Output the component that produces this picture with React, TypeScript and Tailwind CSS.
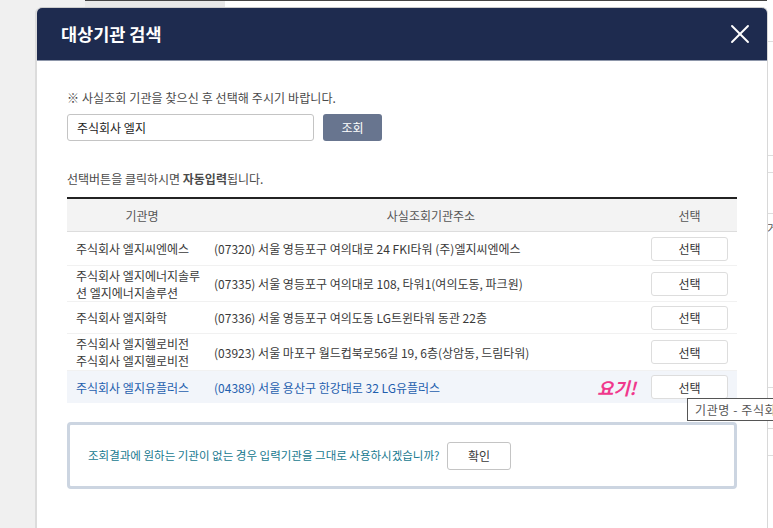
import { X } from "lucide-react"

interface Row {
  name: string[]
  address: string
  height: string
  active?: boolean
}

const rows: Row[] = [
  { name: ["주식회사 엘지씨엔에스"], address: "(07320) 서울 영등포구 여의대로 24 FKI타워 (주)엘지씨엔에스", height: "h-[34px]" },
  { name: ["주식회사 엘지에너지솔루", "션 엘지에너지솔루션"], address: "(07335) 서울 영등포구 여의대로 108, 타워1(여의도동, 파크원)", height: "h-[36px]" },
  { name: ["주식회사 엘지화학"], address: "(07336) 서울 영등포구 여의도동 LG트윈타워 동관 22층", height: "h-[32px]" },
  { name: ["주식회사 엘지헬로비전", "주식회사 엘지헬로비전"], address: "(03923) 서울 마포구 월드컵북로56길 19, 6층(상암동, 드림타워)", height: "h-[37px]" },
  { name: ["주식회사 엘지유플러스"], address: "(04389) 서울 용산구 한강대로 32 LG유플러스", height: "h-[32px]", active: true },
]

const rightLines = ["top-[41px]", "top-[155px]", "top-[172px]", "top-[213px]", "top-[387px]", "top-[428px]", "top-[455px]"]

export default function App() {
  return (
    <div className="relative h-[528px] w-[773px] overflow-hidden bg-[#f0f0f0] pl-[37px] pt-2 font-['Noto_Sans_CJK_KR','Noto_Sans',sans-serif] text-xs text-[#3a3a3a]">
      {/* page behind the modal */}
      <div className="absolute left-[85px] top-0 h-2 w-[140px] border-t border-[#444] bg-[#e8e8e8]" />
      <div className="absolute left-[225px] right-0 top-0 h-2 border-t border-[#444] bg-white" />
      <div className="absolute bottom-0 right-0 top-0 w-[6px] bg-white" />
      {rightLines.map((top) => (
        <div key={top} className={`absolute right-0 h-px w-[6px] bg-[#ddd] ${top}`} />
      ))}
      <span className="absolute right-0 top-[221px] w-[6px] overflow-hidden text-[11px] text-[#555]">거</span>

      {/* modal */}
      <div className="relative h-[540px] w-[730px] rounded-t-[5px] bg-white shadow-[-2px_0_0_#dcdcdc,1px_0_0_#d8d8d8,0_-1px_0_#ccc]">
        <div className="flex h-[53px] items-center justify-between rounded-t-[5px] border-b border-[#8d96aa] bg-[#1e2b4f] pl-6 pr-[11px] text-white">
          <h2 className="text-[17.5px] font-bold">대상기관 검색</h2>
          <X className="h-8 w-8" strokeWidth={1.4} />
        </div>

        <div className="px-[30px] pt-[27px]">
          <p className="h-[19px] leading-[19px] tracking-[0.1px] text-[#4a4a4a]">※ 사실조회 기관을 찾으신 후 선택해 주시기 바랍니다.</p>
          <div className="mt-[7px] flex gap-[9px]">
            <div className="flex h-[27px] w-[247px] items-center rounded-[3px] border border-[#c4c4c4] pl-[9px] text-[#222]">주식회사 엘지</div>
            <button className="h-[27px] w-[59px] rounded-[3px] bg-[#68758f] text-white">조회</button>
          </div>
          <p className="mt-[28px] h-[19px] leading-[19px] text-[#4a4a4a]">
            선택버튼을 클릭하시면 <b className="font-bold">자동입력</b>됩니다.
          </p>

          {/* results table */}
          <div className="mt-[9px] w-[670px] border-t-2 border-[#222]">
            <div className="flex h-[33px] items-center border-b border-[#ddd] bg-[#f3f3f3] pt-[2px] text-[#555]">
              <span className="w-[150px] text-center">기관명</span>
              <span className="w-[428px] text-center">사실조회기관주소</span>
              <span className="w-[89px] text-center">선택</span>
            </div>
            {rows.map((row) => (
              <div
                key={row.address}
                className={`flex items-center border-b border-[#f1f1f1] leading-[17px] ${row.height} ${row.active ? "border-b-0 bg-[#f2f5fa] text-[#1f5fae]" : ""}`}
              >
                <div className="w-[138px] pl-[9px]">
                  {row.name.map((line) => (
                    <div key={line}>{line}</div>
                  ))}
                </div>
                <div className="min-w-0 flex-1 pl-[9px]">{row.address}</div>
                {row.active && <span className="mr-[15px] text-[17.5px] font-bold italic text-[#f0388c]">요기!</span>}
                <button className="mr-[9px] h-[24px] w-[77px] shrink-0 rounded-[3px] border border-[#ddd] bg-white text-[#333]">선택</button>
              </div>
            ))}
          </div>

          {/* no-match notice */}
          <div className="mt-[19px] flex h-[67px] w-[670px] items-center rounded-[4px] border-[3px] border-[#ccd5e1] pl-[18px]">
            <span className="w-[359px] whitespace-nowrap text-[11.5px] text-[#17798f]">조회결과에 원하는 기관이 없는 경우 입력기관을 그대로 사용하시겠습니까?</span>
            <button className="h-[28px] w-[64px] rounded-[3px] border border-[#c4c4c4] bg-white">확인</button>
          </div>
        </div>
      </div>

      {/* tooltip */}
      <div className="absolute left-[687px] top-[398px] h-[23px] w-[90px] overflow-hidden whitespace-nowrap border border-[#555] bg-white pl-[7px] text-[12px] leading-[21px] tracking-[0.6px] text-[#555]">
        기관명 - 주식회사 엘지유플러스
      </div>
    </div>
  )
}
